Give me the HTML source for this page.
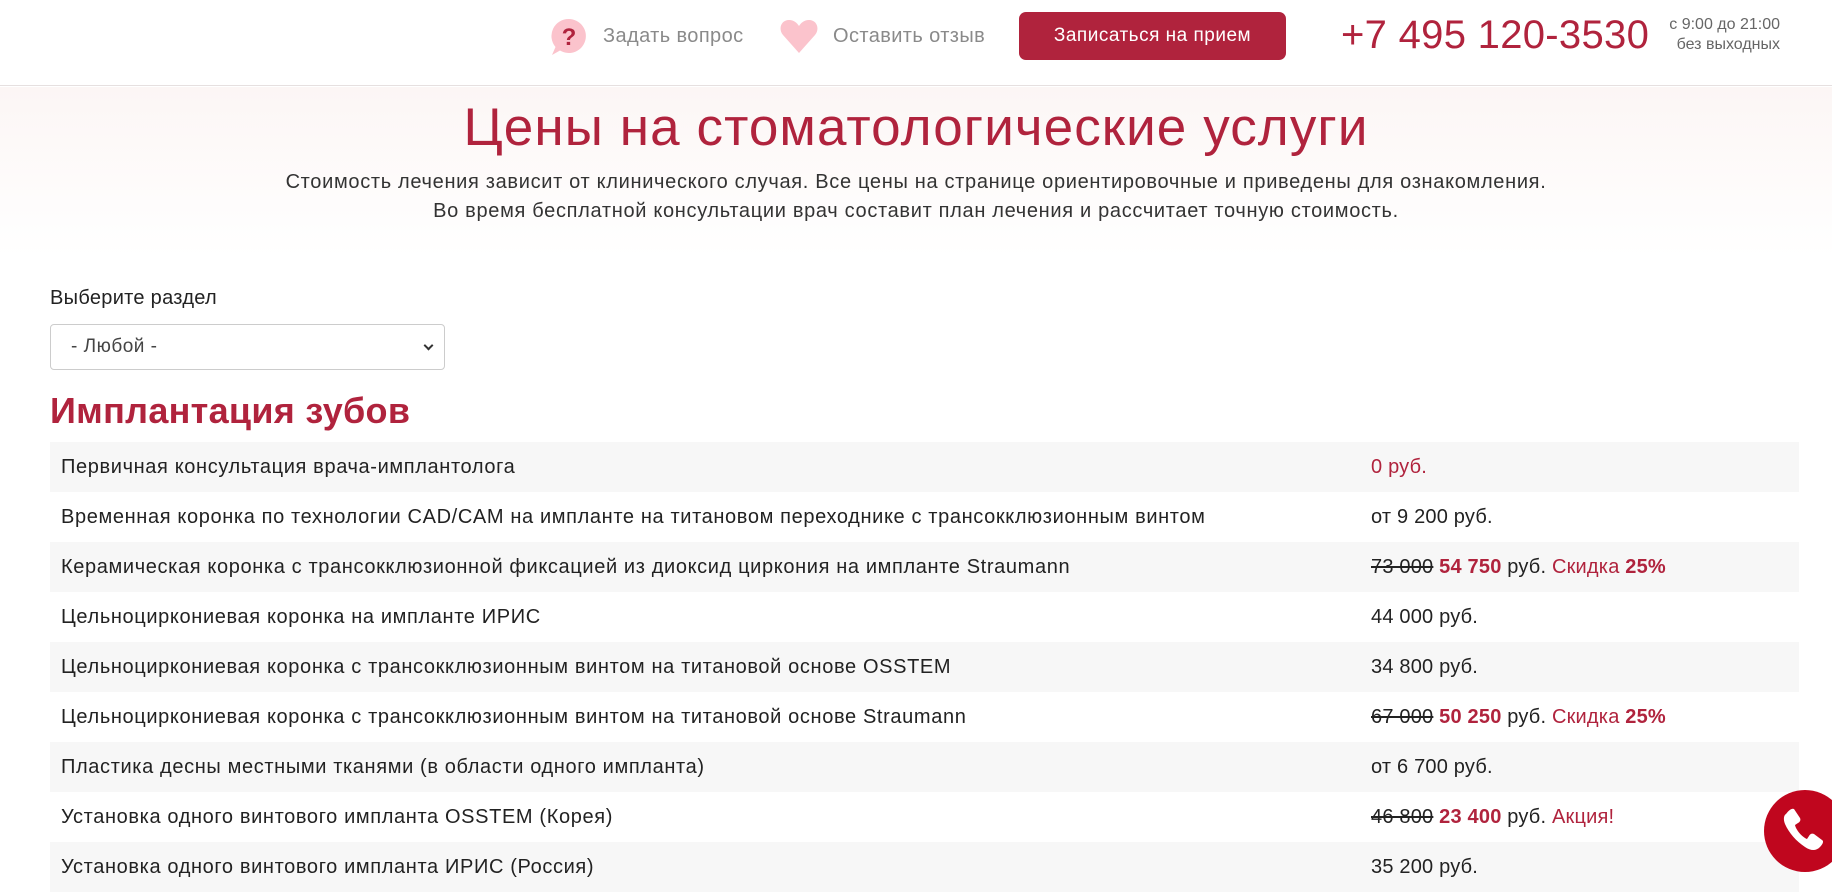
<!DOCTYPE html>
<html><head><meta charset="utf-8">
<style>
*{margin:0;padding:0;box-sizing:border-box}
body{width:1832px;height:892px;overflow:hidden;background:#fff;font-family:"Liberation Sans",sans-serif;color:#222;position:relative}
.hdr{position:absolute;left:0;top:0;width:1832px;height:86px;border-bottom:1px solid #e6e0e0;background:#fff}
.ab{position:absolute}
.gray{color:#8a8a8a;font-size:20px;letter-spacing:0.4px}
.btn{position:absolute;left:1019px;top:12px;width:267px;height:48px;background:#b0233d;border-radius:7px;color:#fff;font-size:19px;text-align:center;line-height:48px;letter-spacing:0.5px}
.phone{position:absolute;left:1341px;top:13px;font-size:40px;color:#b0233d;letter-spacing:0.3px}
.hours{position:absolute;left:1660px;top:15px;font-size:16px;color:#666;line-height:20px;text-align:right;width:120px}
.hero{position:absolute;left:0;top:87px;width:1832px;height:170px;background:linear-gradient(#fcf6f5,#fff)}
h1{position:absolute;left:0;width:1832px;top:97px;text-align:center;font-size:53px;font-weight:normal;color:#b0233d;letter-spacing:1.1px}
.sub{position:absolute;left:0;width:1832px;top:168px;text-align:center;font-size:20px;line-height:29px;color:#333;letter-spacing:0.68px}
.lbl{position:absolute;left:50px;top:287px;font-size:20px;letter-spacing:0.3px}
.sel{position:absolute;left:50px;top:324px;width:395px;height:46px;border:1px solid #ccc;border-radius:4px;font-size:19px;line-height:44px;padding-left:20px;color:#444;letter-spacing:0.5px}
.sel:after{content:"";position:absolute right:12px;}
.sel i{position:absolute;right:12px;top:17px;width:7px;height:7px;border-right:2px solid #333;border-bottom:2px solid #333;transform:rotate(45deg)}
h2{position:absolute;left:50px;top:390px;font-size:36px;color:#b0233d;font-weight:bold;letter-spacing:0.3px}
table{position:absolute;left:50px;top:442px;width:1749px;border-collapse:collapse;font-size:20px;letter-spacing:0.63px}
td{height:50px;padding:0 11px;color:#222}
tr:nth-child(odd) td{background:#f7f7f7}
td.p{width:438px;padding-left:10px;letter-spacing:0.2px}
.r{color:#b0233d}
s{color:#222}
b.r{font-weight:bold}
.call{position:absolute;left:1764px;top:790px;width:82px;height:82px;border-radius:50%;background:#c0061e}
</style></head><body>
<div class="hdr">
 <svg class="ab" style="left:549px;top:17px" width="40" height="40" viewBox="0 0 40 40"><path d="M20 2a17 17 0 1 1-9 31.5L3 38l3.5-8A17 17 0 0 1 20 2z" fill="#fbc3cc"/><text x="20" y="28" text-anchor="middle" font-size="24" font-weight="bold" fill="#b0233d" font-family="Liberation Sans">?</text></svg>
 <div class="ab gray" style="left:603px;top:25px">Задать вопрос</div>
 <svg class="ab" style="left:779px;top:18px" width="40" height="36" viewBox="0 0 40 36"><path d="M20 35L4 17C-1 11 2 2 10 2c5 0 8 3 10 6 2-3 5-6 10-6 8 0 11 9 6 15z" fill="#fbc3cc"/></svg>
 <div class="ab gray" style="left:833px;top:25px">Оставить отзыв</div>
 <div class="btn">Записаться на прием</div>
 <div class="phone">+7 495 120-3530</div>
 <div class="hours">с 9:00 до 21:00<br>без выходных</div>
</div>
<div class="hero"></div>
<h1>Цены на стоматологические услуги</h1>
<div class="sub">Стоимость лечения зависит от клинического случая. Все цены на странице ориентировочные и приведены для ознакомления.<br>Во время бесплатной консультации врач составит план лечения и рассчитает точную стоимость.</div>
<div class="lbl">Выберите раздел</div>
<div class="sel">- Любой -<i></i></div>
<h2>Имплантация зубов</h2>
<table>
<tr><td>Первичная консультация врача-имплантолога</td><td class="p"><span class="r">0 руб.</span></td></tr>
<tr><td>Временная коронка по технологии CAD/CAM на импланте на титановом переходнике с трансокклюзионным винтом</td><td class="p">от 9 200 руб.</td></tr>
<tr><td>Керамическая коронка с трансокклюзионной фиксацией из диоксид циркония на импланте Straumann</td><td class="p"><s>73 000</s> <b class="r">54 750</b> руб. <span class="r">Скидка <b>25%</b></span></td></tr>
<tr><td>Цельноциркониевая коронка на импланте ИРИС</td><td class="p">44 000 руб.</td></tr>
<tr><td>Цельноциркониевая коронка с трансокклюзионным винтом на титановой основе OSSTEM</td><td class="p">34 800 руб.</td></tr>
<tr><td>Цельноциркониевая коронка с трансокклюзионным винтом на титановой основе Straumann</td><td class="p"><s>67 000</s> <b class="r">50 250</b> руб. <span class="r">Скидка <b>25%</b></span></td></tr>
<tr><td>Пластика десны местными тканями (в области одного импланта)</td><td class="p">от 6 700 руб.</td></tr>
<tr><td>Установка одного винтового импланта OSSTEM (Корея)</td><td class="p"><s>46 800</s> <b class="r">23 400</b> руб. <span class="r">Акция!</span></td></tr>
<tr><td>Установка одного винтового импланта ИРИС (Россия)</td><td class="p">35 200 руб.</td></tr>
</table>
<div class="call"><svg width="82" height="82" viewBox="0 0 82 82"><path d="M22 24c3-4 6-6 8-5l6 9c1 2 0 4-2 5l-3 2c1 5 7 12 12 14l2-3c1-2 3-3 5-2l8 6c2 1 1 4-2 7-4 4-9 4-15 0-9-6-16-14-20-23-2-5-1-9 1-10z" fill="#fff"/></svg></div>
</body></html>
